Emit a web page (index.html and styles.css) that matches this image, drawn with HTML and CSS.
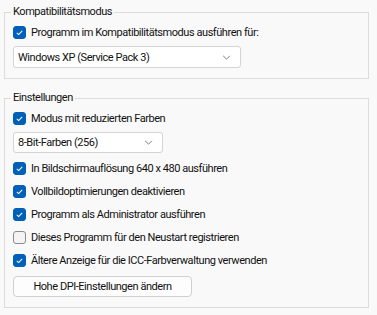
FILE: index.html
```
<!doctype html>
<html lang="de">
	<head>
		<meta charset="UTF-8" />
		<title>Kompatibilität</title>
		<link rel="stylesheet" href="styles.css">
	</head>
	<body>
		<fieldset class="group group-compat">
			<legend>Kompatibilitätsmodus</legend>
			<label class="check">
				<span class="box checked"><svg viewBox="0 0 13 13"><path d="M3.3 6.9 L5.5 9 L9.7 4.6" /></svg></span>
				Programm im Kompatibilitätsmodus ausführen für:
			</label>
			<div class="select wide">
				<span>Windows XP (Service Pack 3)</span>
				<svg class="chevron" viewBox="0 0 10 6"><path d="M1 1 L5 5 L9 1" /></svg>
			</div>
		</fieldset>

		<fieldset class="group group-settings">
			<legend>Einstellungen</legend>
			<label class="check">
				<span class="box checked"><svg viewBox="0 0 13 13"><path d="M3.3 6.9 L5.5 9 L9.7 4.6" /></svg></span>
				Modus mit reduzierten Farben
			</label>
			<div class="select narrow">
				<span>8-Bit-Farben (256)</span>
				<svg class="chevron" viewBox="0 0 10 6"><path d="M1 1 L5 5 L9 1" /></svg>
			</div>
			<div class="list">
				<label class="check">
					<span class="box checked"><svg viewBox="0 0 13 13"><path d="M3.3 6.9 L5.5 9 L9.7 4.6" /></svg></span>
					In Bildschirmauflösung 640 x 480 ausführen
				</label>
				<label class="check">
					<span class="box checked"><svg viewBox="0 0 13 13"><path d="M3.3 6.9 L5.5 9 L9.7 4.6" /></svg></span>
					Vollbildoptimierungen deaktivieren
				</label>
				<label class="check">
					<span class="box checked"><svg viewBox="0 0 13 13"><path d="M3.3 6.9 L5.5 9 L9.7 4.6" /></svg></span>
					Programm als Administrator ausführen
				</label>
				<label class="check">
					<span class="box"></span>
					Dieses Programm für den Neustart registrieren
				</label>
				<label class="check">
					<span class="box checked"><svg viewBox="0 0 13 13"><path d="M3.3 6.9 L5.5 9 L9.7 4.6" /></svg></span>
					Ältere Anzeige für die ICC-Farbverwaltung verwenden
				</label>
			</div>
			<button class="button">Hohe DPI-Einstellungen ändern</button>
		</fieldset>
	</body>
</html>
```

FILE: styles.css
```
body {
	margin: 0;
	background: #f9f9f9;
	font-family: Roboto, "Liberation Sans", sans-serif;
	font-size: 11px;
	letter-spacing: -0.45px;
	color: #111;
	width: 377px;
	height: 315px;
	overflow: hidden;
}
.group {
	margin: 4px 8px 0 4px;
	padding: 0 8px 10px 8px;
	border: 1px solid #dcdcdc;
	min-width: 0;
}
.group-settings {
	margin-top: 11px;
}
legend {
	padding: 0 2px;
	margin-left: -2px;
	line-height: 16px;
}
.check {
	display: flex;
	align-items: center;
	gap: 5px;
	height: 20px;
	margin-top: 2px;
}
.box {
	width: 13px;
	height: 13px;
	box-sizing: border-box;
	border: 1px solid #8b8b8b;
	border-radius: 3px;
	background: #f4f4f4;
	flex-shrink: 0;
	display: flex;
}
.box.checked {
	background: #005fb8;
	border-color: #005fb8;
}
.box svg {
	width: 11px;
	height: 11px;
	fill: none;
	stroke: #fff;
	stroke-width: 1.2;
}
.select {
	display: flex;
	align-items: center;
	justify-content: space-between;
	box-sizing: border-box;
	height: 22px;
	margin-top: 4px;
	padding: 0 9px 0 4px;
	background: #fff;
	border: 1px solid #d4d4d4;
	border-radius: 3px;
}
.select.wide {
	width: 228px;
}
.select.narrow {
	width: 150px;
	height: 21px;
}
.chevron {
	width: 9px;
	height: 5px;
	fill: none;
	stroke: #606060;
	stroke-width: 1;
}
.list {
	margin-top: 4px;
}
.list .check {
	height: 23px;
	margin-top: 0;
}
.button {
	display: block;
	margin-top: 4px;
	width: 179px;
	height: 21px;
	padding: 0;
	font: inherit;
	letter-spacing: inherit;
	color: #111;
	background: #fdfdfd;
	border: 1px solid #d0d0d0;
	border-radius: 4px;
}
```
